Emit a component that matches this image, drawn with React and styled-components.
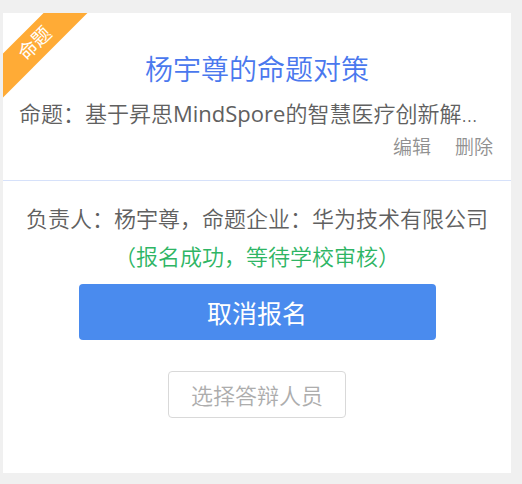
import React from "react";
import styled, { createGlobalStyle } from "styled-components";

const GlobalStyle = createGlobalStyle`
  * {
    box-sizing: border-box;
  }
  body {
    margin: 0;
    background: #f0f0f0;
    color: #606060;
    font-family: "Open Sans", "Noto Sans CJK SC", sans-serif;
    font-weight: 350;
  }
`;

const Page = styled.main`
  padding: 13px 11px 11px 3px;
`;

const Card = styled.article`
  position: relative;
  overflow: hidden;
  background: #fff;
`;

const Ribbon = styled.span`
  position: absolute;
  top: 15px;
  left: -39px;
  width: 142px;
  background: #ffab36;
  color: #fff;
  font-size: 19px;
  font-weight: 400;
  line-height: 31px;
  text-align: center;
  transform: rotate(-45deg);
`;

const Header = styled.header`
  padding: 36px 16px 16px;
  border-bottom: 1px solid #d6e1fa;
`;

const Title = styled.h2`
  margin: 0 0 7px;
  color: #4a78ee;
  font-size: 28px;
  font-weight: inherit;
  line-height: 40px;
  text-align: center;
`;

const Topic = styled.p`
  margin: 0;
  overflow: hidden;
  font-size: 22px;
  line-height: 34px;
  text-overflow: ellipsis;
  white-space: nowrap;
`;

const Latin = styled.span`
  font-weight: 400;
`;

const Actions = styled.nav`
  display: flex;
  justify-content: flex-end;
  gap: 24px;
  padding: 0 2px;
`;

const ActionLink = styled.a`
  color: #909090;
  font-size: 19px;
  line-height: 34px;
  text-decoration: none;
`;

const Body = styled.section`
  display: flex;
  flex-direction: column;
  align-items: center;
  padding: 18px 16px 55px;
`;

const Info = styled.p`
  margin: 0;
  color: ${({ $success }) => ($success ? "#2eb564" : "inherit")};
  font-size: 22px;
  line-height: 38px;
  text-align: center;
`;

const Button = styled.button`
  border-radius: 4px;
  font-family: inherit;
  font-weight: inherit;
  cursor: pointer;
`;

const PrimaryButton = styled(Button)`
  width: 75%;
  height: 56px;
  margin-top: 9px;
  border: 0;
  background: #4a8bee;
  color: #fff;
  font-size: 25px;
  font-weight: 400;
`;

const OutlineButton = styled(Button)`
  height: 47px;
  margin-top: 31px;
  padding: 0 22px 2px;
  border: 1px solid #d9d9d9;
  background: #fff;
  color: #adadad;
  font-size: 22px;
`;

export default function App() {
  return (
    <Page lang="zh-CN">
      <GlobalStyle />
      <Card>
        <Ribbon>命题</Ribbon>
        <Header>
          <Title>杨宇尊的命题对策</Title>
          <Topic>
            命题：基于昇思<Latin>MindSpore</Latin>的智慧医疗创新解决方案
          </Topic>
          <Actions>
            <ActionLink href="#edit">编辑</ActionLink>
            <ActionLink href="#delete">删除</ActionLink>
          </Actions>
        </Header>
        <Body>
          <Info>负责人：杨宇尊，命题企业：华为技术有限公司</Info>
          <Info $success>（报名成功，等待学校审核）</Info>
          <PrimaryButton type="button">取消报名</PrimaryButton>
          <OutlineButton type="button">选择答辩人员</OutlineButton>
        </Body>
      </Card>
    </Page>
  );
}
